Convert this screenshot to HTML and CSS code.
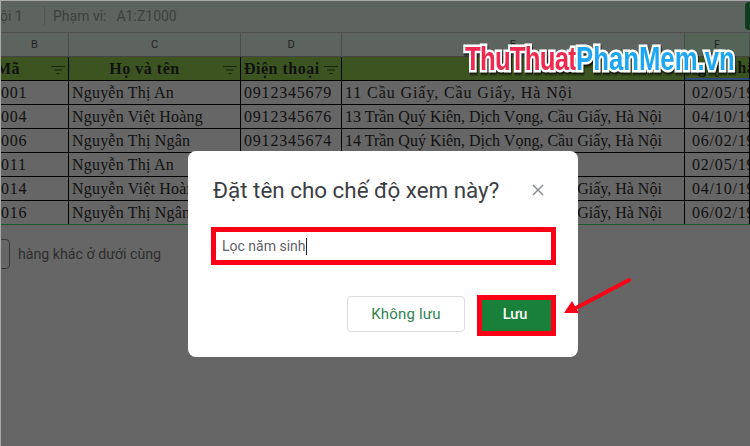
FILE: index.html
```html
<!DOCTYPE html>
<html lang="vi">
<head>
    <meta charset="UTF-8">
    <meta name="viewport" content="width=device-width, initial-scale=1.0">
    <title>Đặt tên cho chế độ xem</title>
    <link rel="stylesheet" href="styles.css">
</head>
<body>

    <!-- Thanh chế độ xem -->
    <div class="toolbar">
        <span class="view-name">ội 1</span>
        <span class="toolbar-sep"></span>
        <span class="range-label">Phạm vi:</span>
        <span class="range-value">A1:Z1000</span>
        <span class="toolbar-btn"></span>
    </div>

    <!-- Bảng tính -->
    <div class="sheet">
        <div class="row letters">
            <div class="cell">B</div>
            <div class="cell">C</div>
            <div class="cell">D</div>
            <div class="cell">E</div>
            <div class="cell active">F</div>
        </div>
        <div class="row head">
            <div class="cell"><span class="clip-left">Mã</span><svg class="filter" viewBox="0 0 14 8"><path d="M0 .5h14M3 4h8M5.5 7.5h3"/></svg></div>
            <div class="cell name-head">Họ và tên<svg class="filter" viewBox="0 0 14 8"><path d="M0 .5h14M3 4h8M5.5 7.5h3"/></svg></div>
            <div class="cell">Điện thoại<svg class="filter" viewBox="0 0 14 8"><path d="M0 .5h14M3 4h8M5.5 7.5h3"/></svg></div>
            <div class="cell"></div>
            <div class="cell selected">Ngày nhập</div>
        </div>
        <div class="row">
            <div class="cell code">001</div>
            <div class="cell">Nguyễn Thị An</div>
            <div class="cell num">0912345679</div>
            <div class="cell addr-short">11 Cầu Giấy, Cầu Giấy, Hà Nội</div>
            <div class="cell num date">02/05/1990</div>
        </div>
        <div class="row">
            <div class="cell code">004</div>
            <div class="cell">Nguyễn Việt Hoàng</div>
            <div class="cell num">0912345676</div>
            <div class="cell addr">13 Trần Quý Kiên, Dịch Vọng, Cầu Giấy, Hà Nội</div>
            <div class="cell num date">04/10/1992</div>
        </div>
        <div class="row">
            <div class="cell code">006</div>
            <div class="cell">Nguyễn Thị Ngân</div>
            <div class="cell num">0912345674</div>
            <div class="cell addr">14 Trần Quý Kiên, Dịch Vọng, Cầu Giấy, Hà Nội</div>
            <div class="cell num date">06/02/1991</div>
        </div>
        <div class="row">
            <div class="cell code">011</div>
            <div class="cell">Nguyễn Thị An</div>
            <div class="cell num">0912345679</div>
            <div class="cell addr-short">11 Cầu Giấy, Cầu Giấy, Hà Nội</div>
            <div class="cell num date">02/05/1990</div>
        </div>
        <div class="row">
            <div class="cell code">014</div>
            <div class="cell">Nguyễn Việt Hoàng</div>
            <div class="cell num">0912345676</div>
            <div class="cell addr">13 Trần Quý Kiên, Dịch Vọng, Cầu Giấy, Hà Nội</div>
            <div class="cell num date">04/10/1992</div>
        </div>
        <div class="row last">
            <div class="cell code">016</div>
            <div class="cell">Nguyễn Thị Ngân</div>
            <div class="cell num">0912345674</div>
            <div class="cell addr">14 Trần Quý Kiên, Dịch Vọng, Cầu Giấy, Hà Nội</div>
            <div class="cell num date">06/02/1991</div>
        </div>
    </div>

    <!-- Thêm hàng -->
    <div class="add-rows">
        <span class="add-btn"></span>
        <span>hàng khác ở dưới cùng</span>
    </div>

    <!-- Logo -->
    <div class="logo"><span class="logo-red">ThuThuat</span><span class="logo-blue">PhanMem.vn</span></div>

    <!-- Hộp thoại -->
    <div class="dialog">
        <div class="dialog-head">
            <h1>Đặt tên cho chế độ xem này?</h1>
            <svg class="close" viewBox="0 0 12 12"><path d="M1 1l10 10M11 1L1 11"/></svg>
        </div>
        <div class="name-box">Lọc năm sinh<span class="caret"></span></div>
        <div class="dialog-actions">
            <button class="btn-cancel">Không lưu</button>
            <span class="save-mark"><button class="btn-save">Lưu</button></span>
        </div>
    </div>

    <!-- Mũi tên chỉ nút Lưu -->
    <svg class="arrow" viewBox="0 0 70 50">
        <path class="arrow-line" d="M65 3L12 31"/>
        <path class="arrow-tip" d="M0 36L8 24L15 36Z"/>
    </svg>

</body>
</html>
```

FILE: styles.css
```css
/* Nền đã bị làm tối bởi hộp thoại */
html, body {
    margin: 0;
    padding: 0;
}

body {
    position: relative;
    width: 749px;
    height: 445px;
    overflow: hidden;
    background-color: #666;
    border-top: 1px solid #a9a9a9;
    border-left: 1px solid #a9a9a9;
    font-family: "Liberation Serif", serif;
}

/* Thanh chế độ xem */
.toolbar {
    display: flex;
    align-items: center;
    height: 30px;
    padding-bottom: 1px;
    background-color: #5d645f;
    border-bottom: 1px solid #505050;
    font-family: Roboto, sans-serif;
    font-size: 14px;
    color: #3a423d;
}

.view-name {
    width: 44px;
    margin-left: -1px;
    white-space: nowrap;
}

.toolbar-sep {
    width: 1px;
    height: 20px;
    background-color: #555;
}

.range-label {
    margin-left: 8px;
}

.range-value {
    margin-left: 10px;
}

.toolbar-btn {
    width: 8px;
    height: 28px;
    margin-left: auto;
    margin-right: -3px;
    background-color: #0f3d1c;
    border-radius: 4px 0 0 4px;
}

/* Bảng */
.row {
    display: grid;
    grid-template-columns: 68px 172px 101px 343px 65px;
    height: 24px;
    border-bottom: 1px solid #000;
    box-sizing: border-box;
    font-size: 16px;
    letter-spacing: 0.2px;
    color: #111;
}

.cell {
    display: flex;
    align-items: center;
    padding-left: 3px;
    padding-top: 1px;
    border-right: 1px solid #000;
    white-space: nowrap;
    overflow: hidden;
}

.code {
    padding-left: 0;
    letter-spacing: 0.8px;
}

.num {
    letter-spacing: 0.8px;
}

.date {
    padding-left: 7px;
}

.addr {
    letter-spacing: 0;
}

.addr-short {
    letter-spacing: 0.9px;
}

.last {
    border-bottom-color: #1d5a2c;
}

.letters {
    background-color: #5d645f;
    border-bottom: 1px solid #444;
    font-family: Roboto, sans-serif;
    font-size: 11px;
    letter-spacing: 0;
    color: #222;
}

.letters .cell {
    justify-content: center;
    padding: 0;
    border-right: 1px solid #4c4c4c;
}

.letters .active {
    background-color: #546558;
}

.head {
    background-color: #3c5520;
    font-weight: bold;
    letter-spacing: 0.5px;
}

.head .cell {
    position: relative;
}

.clip-left {
    margin-left: -8px;
}

.name-head {
    justify-content: center;
    padding-right: 23px;
}

.head .selected {
    padding-left: 1px;
    border-bottom: 2px solid #2a4a78;
}

.filter {
    position: absolute;
    right: 3px;
    top: 9px;
    width: 14px;
    height: 8px;
    fill: none;
    stroke: #17250d;
    stroke-width: 1;
}

/* Dòng thêm hàng */
.add-rows {
    display: flex;
    align-items: center;
    gap: 8px;
    margin-top: 14px;
    font-family: Roboto, sans-serif;
    font-size: 14.2px;
    color: #2e2e2e;
}

.add-btn {
    width: 12px;
    height: 28px;
    margin-left: -5px;
    border: 1px solid #3a3a3a;
    border-radius: 4px;
}

/* Logo */
.logo {
    position: absolute;
    left: 464px;
    top: 40px;
    font-family: "Liberation Sans", sans-serif;
    font-size: 33px;
    font-weight: bold;
    line-height: 36px;
    white-space: nowrap;
    transform: scaleX(0.78);
    transform-origin: left center;
    -webkit-text-stroke: 5px #fff;
    paint-order: stroke fill;
    filter: drop-shadow(1px 2px 1px rgba(0, 0, 0, 0.8));
}

.logo-red {
    color: #ef2a50;
    letter-spacing: -1px;
}

.logo-blue {
    color: #1fa6f2;
}

/* Hộp thoại */
.dialog {
    position: absolute;
    left: 187px;
    top: 150px;
    width: 390px;
    height: 206px;
    box-sizing: border-box;
    padding: 0 22px 0 23px;
    background-color: #fff;
    border-radius: 8px;
    font-family: Roboto, sans-serif;
}

.dialog-head {
    display: flex;
    align-items: center;
    justify-content: space-between;
    height: 76px;
    padding: 1px 12px 0 2px;
    box-sizing: border-box;
}

.dialog-head h1 {
    margin: 0;
    font-size: 22.4px;
    font-weight: 400;
    color: #3c4043;
}

.close {
    width: 12px;
    height: 12px;
    fill: none;
    stroke: #80868b;
    stroke-width: 1.4;
}

.name-box {
    display: flex;
    align-items: center;
    height: 38px;
    box-sizing: border-box;
    padding-left: 6px;
    border: 5px solid #fb0017;
    font-size: 14px;
    color: #5f6368;
}

.caret {
    width: 1px;
    height: 17px;
    background-color: #222;
}

.dialog-actions {
    display: flex;
    align-items: flex-start;
    justify-content: flex-end;
    gap: 12px;
    margin-top: 30px;
}

.btn-cancel {
    width: 118px;
    height: 36px;
    margin-top: 1px;
    padding-bottom: 2px;
    background-color: #fff;
    border: 1px solid #dadce0;
    border-radius: 4px;
    font-family: Roboto, sans-serif;
    font-size: 15px;
    font-weight: 400;
    letter-spacing: 0.2px;
    color: #2f8450;
}

.save-mark {
    display: block;
    border: 5px solid #fb0017;
}

.btn-save {
    display: block;
    width: 69px;
    height: 31px;
    padding: 0 3px 2px 0;
    background-color: #188038;
    border: none;
    font-family: Roboto, sans-serif;
    font-size: 14.5px;
    font-weight: 500;
    color: #fff;
}

/* Mũi tên */
.arrow {
    position: absolute;
    left: 563px;
    top: 276px;
    width: 70px;
    height: 50px;
}

.arrow-line {
    fill: none;
    stroke: #fb0017;
    stroke-width: 4;
    stroke-linecap: round;
}

.arrow-tip {
    fill: #fb0017;
}
```
